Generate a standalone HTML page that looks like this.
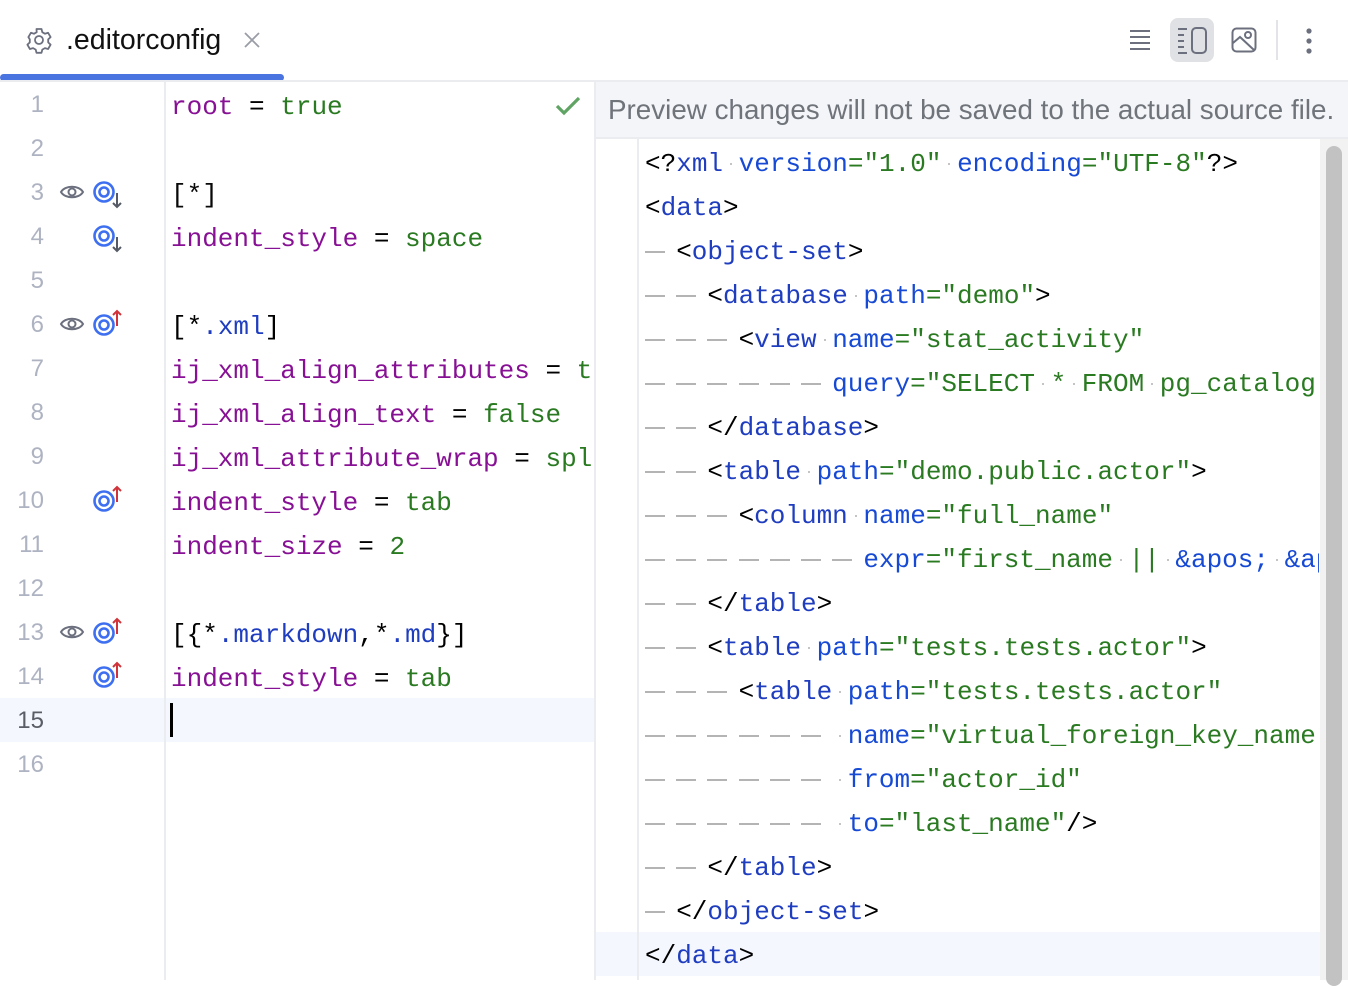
<!DOCTYPE html>
<html><head><meta charset="utf-8"><style>
*{margin:0;padding:0;box-sizing:border-box}
body{width:1348px;height:980px;background:#fff;position:relative;overflow:hidden;font-family:"Liberation Sans",sans-serif}
.mono{font-family:"Liberation Mono",monospace;font-size:26px;white-space:pre}
.ln{position:absolute;left:0;width:44px;text-align:right;font-size:24px;color:#aeb3c2;height:44px;line-height:44px}
.cl{position:absolute;left:171px;height:44px;line-height:44px}
.xl{position:absolute;left:645px;height:44px;line-height:44px}
.p{color:#871094}.g{color:#2a7a22}.b{color:#1f3dbf}.a{color:#174ad4}.k{color:#080808}
.d{display:inline-block;width:31.2px;height:44px;position:relative;vertical-align:top}
.d:before{content:"";position:absolute;left:0;top:21px;width:20px;height:2px;background:#b4b4b4}
.w{display:inline-block;width:15.6px;position:relative;height:44px;vertical-align:top}
.w:before{content:"";position:absolute;left:7px;top:21px;width:2px;height:2px;background:#c4c4c4}
.ic{position:absolute}
</style></head><body>
<svg class="ic" style="left:25px;top:26px" width="28" height="28" viewBox="0 0 28 28"><path d="M11.5 3h5l.8 3.2 2.6 1.5 3.2-.9 2.5 4.3-2.4 2.3v3l2.4 2.3-2.5 4.3-3.2-.9-2.6 1.5-.8 3.2h-5l-.8-3.2-2.6-1.5-3.2.9-2.5-4.3 2.4-2.3v-3L3.4 11.1l2.5-4.3 3.2.9 2.6-1.5z" fill="none" stroke="#6c707e" stroke-width="1.8" stroke-linejoin="round"/><circle cx="14" cy="14" r="4" fill="none" stroke="#6c707e" stroke-width="1.8"/></svg>
<div style="position:absolute;left:66px;top:24px;font-size:28.5px;color:#111">.editorconfig</div>
<svg class="ic" style="left:243px;top:31px" width="18" height="18"><path d="M2 2L16 16M16 2L2 16" stroke="#9a9da6" stroke-width="1.8"/></svg>
<div style="position:absolute;left:0;top:74px;width:284px;height:7px;background:#4a74e0;border-radius:4px"></div>
<div style="position:absolute;left:0;top:80px;width:1348px;height:2px;background:#ebecf0"></div>
<svg class="ic" style="left:1128px;top:28px" width="24" height="24"><g stroke="#6c707e" stroke-width="2"><path d="M2 3h20M2 9h20M2 15h20M2 21h20"/></g></svg>
<div style="position:absolute;left:1170px;top:18px;width:44px;height:44px;background:#dfe1e5;border-radius:8px"></div>
<svg class="ic" style="left:1177px;top:26px" width="32" height="30"><g stroke="#6c707e" stroke-width="2" fill="none"><path d="M1 3h9M1 9h6M1 15h6M1 21h6M1 27h9"/><rect x="15" y="2" width="14" height="25" rx="4"/></g></svg>
<svg class="ic" style="left:1231px;top:27px" width="26" height="26"><g stroke="#6c707e" stroke-width="2" fill="none"><rect x="1.5" y="1.5" width="23" height="23" rx="4"/><circle cx="17" cy="8" r="3"/><path d="M2 16l7-6 14 13"/></g></svg>
<div style="position:absolute;left:1276px;top:20px;width:2px;height:40px;background:#e3e4e8"></div>
<svg class="ic" style="left:1305px;top:27px" width="8" height="28"><g fill="#6c707e"><circle cx="4" cy="4" r="2.6"/><circle cx="4" cy="14" r="2.6"/><circle cx="4" cy="24" r="2.6"/></g></svg>

<div style="position:absolute;left:0;top:698px;width:595px;height:44px;background:#f5f7fe"></div>
<div style="position:absolute;left:164px;top:82px;width:2px;height:898px;background:#ebecf0"></div>
<div style="position:absolute;left:594px;top:82px;width:2px;height:898px;background:#ebecf0"></div>
<div class="ln" style="top:83px">1</div><div class="ln" style="top:127px">2</div><div class="ln" style="top:171px">3</div><div class="ln" style="top:215px">4</div><div class="ln" style="top:259px">5</div><div class="ln" style="top:303px">6</div><div class="ln" style="top:347px">7</div><div class="ln" style="top:391px">8</div><div class="ln" style="top:435px">9</div><div class="ln" style="top:479px">10</div><div class="ln" style="top:523px">11</div><div class="ln" style="top:567px">12</div><div class="ln" style="top:611px">13</div><div class="ln" style="top:655px">14</div><div class="ln" style="top:699px;color:#5a5d66">15</div><div class="ln" style="top:743px">16</div>
<svg class="ic" style="left:59px;top:182px" width="26" height="20"><path d="M2 10C6 3 20 3 24 10C20 17 6 17 2 10z" fill="none" stroke="#6c707e" stroke-width="2"/><circle cx="13" cy="10" r="3.5" fill="none" stroke="#6c707e" stroke-width="2"/></svg>
<svg class="ic" style="left:59px;top:314px" width="26" height="20"><path d="M2 10C6 3 20 3 24 10C20 17 6 17 2 10z" fill="none" stroke="#6c707e" stroke-width="2"/><circle cx="13" cy="10" r="3.5" fill="none" stroke="#6c707e" stroke-width="2"/></svg>
<svg class="ic" style="left:59px;top:622px" width="26" height="20"><path d="M2 10C6 3 20 3 24 10C20 17 6 17 2 10z" fill="none" stroke="#6c707e" stroke-width="2"/><circle cx="13" cy="10" r="3.5" fill="none" stroke="#6c707e" stroke-width="2"/></svg>
<svg class="ic" style="left:93px;top:180px" width="32" height="30"><circle cx="11" cy="12" r="9.5" fill="none" stroke="#3d6ff0" stroke-width="2.6"/><circle cx="11" cy="12" r="4.5" fill="none" stroke="#3d6ff0" stroke-width="2.6"/><path d="M24 13v14M20 23l4 4 4-4" fill="none" stroke="#555a64" stroke-width="2"/></svg>
<svg class="ic" style="left:93px;top:224px" width="32" height="30"><circle cx="11" cy="12" r="9.5" fill="none" stroke="#3d6ff0" stroke-width="2.6"/><circle cx="11" cy="12" r="4.5" fill="none" stroke="#3d6ff0" stroke-width="2.6"/><path d="M24 13v14M20 23l4 4 4-4" fill="none" stroke="#555a64" stroke-width="2"/></svg>
<svg class="ic" style="left:93px;top:308px" width="32" height="30"><circle cx="11" cy="17" r="9.5" fill="none" stroke="#3d6ff0" stroke-width="2.6"/><circle cx="11" cy="17" r="4.5" fill="none" stroke="#3d6ff0" stroke-width="2.6"/><path d="M24 18V3M20 7l4-4 4 4" fill="none" stroke="#d0343a" stroke-width="2"/></svg>
<svg class="ic" style="left:93px;top:484px" width="32" height="30"><circle cx="11" cy="17" r="9.5" fill="none" stroke="#3d6ff0" stroke-width="2.6"/><circle cx="11" cy="17" r="4.5" fill="none" stroke="#3d6ff0" stroke-width="2.6"/><path d="M24 18V3M20 7l4-4 4 4" fill="none" stroke="#d0343a" stroke-width="2"/></svg>
<svg class="ic" style="left:93px;top:616px" width="32" height="30"><circle cx="11" cy="17" r="9.5" fill="none" stroke="#3d6ff0" stroke-width="2.6"/><circle cx="11" cy="17" r="4.5" fill="none" stroke="#3d6ff0" stroke-width="2.6"/><path d="M24 18V3M20 7l4-4 4 4" fill="none" stroke="#d0343a" stroke-width="2"/></svg>
<svg class="ic" style="left:93px;top:660px" width="32" height="30"><circle cx="11" cy="17" r="9.5" fill="none" stroke="#3d6ff0" stroke-width="2.6"/><circle cx="11" cy="17" r="4.5" fill="none" stroke="#3d6ff0" stroke-width="2.6"/><path d="M24 18V3M20 7l4-4 4 4" fill="none" stroke="#d0343a" stroke-width="2"/></svg>
<svg class="ic" style="left:555px;top:96px" width="26" height="20"><path d="M2 10l7 7L24 2" fill="none" stroke="#5fa463" stroke-width="3.2"/></svg>
<div style="position:absolute;left:166px;top:82px;width:428px;height:898px;overflow:hidden">
<div class="mono" style="position:absolute;left:5px;top:2px">
<div class="cl" style="left:0;top:1px"><span class="p">root</span> = <span class="g">true</span></div>
<div class="cl" style="left:0;top:89px"><span class="k">[*]</span></div>
<div class="cl" style="left:0;top:133px"><span class="p">indent_style</span> = <span class="g">space</span></div>
<div class="cl" style="left:0;top:221px">[*<span class="b">.xml</span>]</div>
<div class="cl" style="left:0;top:265px"><span class="p">ij_xml_align_attributes</span> = <span class="g">true</span></div>
<div class="cl" style="left:0;top:309px"><span class="p">ij_xml_align_text</span> = <span class="g">false</span></div>
<div class="cl" style="left:0;top:353px"><span class="p">ij_xml_attribute_wrap</span> = <span class="g">split_into_lines</span></div>
<div class="cl" style="left:0;top:397px"><span class="p">indent_style</span> = <span class="g">tab</span></div>
<div class="cl" style="left:0;top:441px"><span class="p">indent_size</span> = <span class="g">2</span></div>
<div class="cl" style="left:0;top:529px">[{*<span class="b">.markdown</span>,*<span class="b">.md</span>}]</div>
<div class="cl" style="left:0;top:573px"><span class="p">indent_style</span> = <span class="g">tab</span></div>
</div>
<div style="position:absolute;left:4px;top:621px;width:3px;height:34px;background:#000"></div>
</div>

<div style="position:absolute;left:596px;top:82px;width:752px;height:57px;background:#f4f5f8;border-bottom:2px solid #ebecf0"></div>
<div style="position:absolute;left:608px;top:94px;font-size:27.8px;color:#6f737a;white-space:nowrap">Preview changes will not be saved to the actual source file.</div>
<div style="position:absolute;left:596px;top:932px;width:724px;height:44px;background:#f5f7fe"></div>
<div style="position:absolute;left:637px;top:139px;width:2px;height:841px;background:#ebecf0"></div>
<div style="position:absolute;left:1320px;top:139px;width:28px;height:841px;background:#f2f2f2"></div>
<div style="position:absolute;left:1326px;top:146px;width:16px;height:840px;background:#c2c2c2;border-radius:8px"></div>
<div style="position:absolute;left:639px;top:139px;width:680px;height:841px;overflow:hidden">
<div class="mono" style="position:absolute;left:6px;top:3px">
<div class="xl" style="left:0;top:0">&lt;?<span class="b">xml</span><span class="w"></span><span class="a">version</span><span class="g">="1.0"</span><span class="w"></span><span class="a">encoding</span><span class="g">="UTF-8"</span>?&gt;</div>
<div class="xl" style="left:0;top:44px">&lt;<span class="b">data</span>&gt;</div>
<div class="xl" style="left:0;top:88px"><span class="d"></span>&lt;<span class="b">object-set</span>&gt;</div>
<div class="xl" style="left:0;top:132px"><span class="d"></span><span class="d"></span>&lt;<span class="b">database</span><span class="w"></span><span class="a">path</span><span class="g">="demo"</span>&gt;</div>
<div class="xl" style="left:0;top:176px"><span class="d"></span><span class="d"></span><span class="d"></span>&lt;<span class="b">view</span><span class="w"></span><span class="a">name</span><span class="g">="stat_activity"</span></div>
<div class="xl" style="left:0;top:220px"><span class="d"></span><span class="d"></span><span class="d"></span><span class="d"></span><span class="d"></span><span class="d"></span><span class="a">query</span><span class="g">="SELECT<span class="w"></span>*<span class="w"></span>FROM<span class="w"></span>pg_catalog.pg_stat_activity"</span></div>
<div class="xl" style="left:0;top:264px"><span class="d"></span><span class="d"></span>&lt;/<span class="b">database</span>&gt;</div>
<div class="xl" style="left:0;top:308px"><span class="d"></span><span class="d"></span>&lt;<span class="b">table</span><span class="w"></span><span class="a">path</span><span class="g">="demo.public.actor"</span>&gt;</div>
<div class="xl" style="left:0;top:352px"><span class="d"></span><span class="d"></span><span class="d"></span>&lt;<span class="b">column</span><span class="w"></span><span class="a">name</span><span class="g">="full_name"</span></div>
<div class="xl" style="left:0;top:396px"><span class="d"></span><span class="d"></span><span class="d"></span><span class="d"></span><span class="d"></span><span class="d"></span><span class="d"></span><span class="a">expr</span><span class="g">="first_name<span class="w"></span>||<span class="w"></span></span><span class="a">&amp;apos;</span><span class="w"></span><span class="a">&amp;apos;</span></div>
<div class="xl" style="left:0;top:440px"><span class="d"></span><span class="d"></span>&lt;/<span class="b">table</span>&gt;</div>
<div class="xl" style="left:0;top:484px"><span class="d"></span><span class="d"></span>&lt;<span class="b">table</span><span class="w"></span><span class="a">path</span><span class="g">="tests.tests.actor"</span>&gt;</div>
<div class="xl" style="left:0;top:528px"><span class="d"></span><span class="d"></span><span class="d"></span>&lt;<span class="b">table</span><span class="w"></span><span class="a">path</span><span class="g">="tests.tests.actor"</span></div>
<div class="xl" style="left:0;top:572px"><span class="d"></span><span class="d"></span><span class="d"></span><span class="d"></span><span class="d"></span><span class="d"></span><span class="w"></span><span class="a">name</span><span class="g">="virtual_foreign_key_name"</span></div>
<div class="xl" style="left:0;top:616px"><span class="d"></span><span class="d"></span><span class="d"></span><span class="d"></span><span class="d"></span><span class="d"></span><span class="w"></span><span class="a">from</span><span class="g">="actor_id"</span></div>
<div class="xl" style="left:0;top:660px"><span class="d"></span><span class="d"></span><span class="d"></span><span class="d"></span><span class="d"></span><span class="d"></span><span class="w"></span><span class="a">to</span><span class="g">="last_name"</span>/&gt;</div>
<div class="xl" style="left:0;top:704px"><span class="d"></span><span class="d"></span>&lt;/<span class="b">table</span>&gt;</div>
<div class="xl" style="left:0;top:748px"><span class="d"></span>&lt;/<span class="b">object-set</span>&gt;</div>
<div class="xl" style="left:0;top:792px">&lt;/<span class="b">data</span>&gt;</div>
</div></div>
</body></html>
